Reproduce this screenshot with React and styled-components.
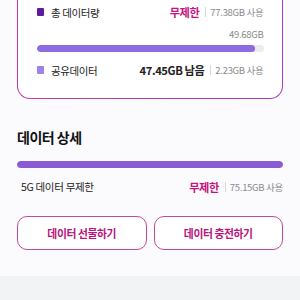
import styled, { createGlobalStyle } from 'styled-components';

const GlobalStyle = createGlobalStyle`
  html, body {
    margin: 0;
    padding: 0;
    background: #fbfafd;
    font-family: "Noto Sans CJK KR", "Noto Sans", sans-serif;
    color: #222;
  }
`;

const Page = styled.div`
  width: 300px;
  height: 300px;
  overflow: hidden;
  display: flex;
  flex-direction: column;
`;

const Content = styled.div`
  padding: 0 17px;
  display: flex;
  flex-direction: column;
`;

const Card = styled.div`
  margin-top: -16px;
  padding: 19px 18.5px 18.5px;
  border: 1.5px solid transparent;
  border-top: none;
  border-radius: 0 0 13px 13px;
  background:
    linear-gradient(#fff, #fff) padding-box,
    linear-gradient(to right, #c8399c, #b43bb0 60%, #a53dc6) border-box;
  display: flex;
  flex-direction: column;
`;

const Row = styled.div`
  height: 18px;
  display: flex;
  align-items: center;
  justify-content: space-between;
  margin-top: ${p => p.$mt || 0}px;
`;

const Label = styled.div`
  display: flex;
  align-items: center;
  gap: 7px;
  font-size: 10.5px;
  letter-spacing: -0.4px;
  color: #222;
`;

const Bullet = styled.span`
  width: 7.5px;
  height: 7.5px;
  border-radius: 1px;
  background: ${p => p.$color};
`;

const Values = styled.div`
  display: flex;
  align-items: center;
`;

const Strong = styled.span`
  font-size: 11.2px;
  font-weight: 700;
  letter-spacing: -0.4px;
  color: ${p => p.$color || '#222'};
`;

const Divider = styled.span`
  width: 1px;
  height: 10px;
  background: #d6d6d9;
  margin: 0 4px 0 6px;
`;

const Muted = styled.span`
  font-size: 9.5px;
  letter-spacing: -0.3px;
  color: #8a8a8e;
`;

const Caption = styled.div`
  margin-top: 6px;
  height: 14px;
  line-height: 14px;
  text-align: right;
  font-size: 9.5px;
  letter-spacing: -0.3px;
  color: #8a8a8e;
`;

const Track = styled.div`
  margin-top: ${p => p.$mt || 0}px;
  height: 7px;
  border-radius: 4px;
  background: #ececee;
  overflow: hidden;
`;

const Fill = styled.div`
  height: 100%;
  border-radius: 4px;
  background: ${p => p.$color};
`;

const Heading = styled.h2`
  margin: 27px 0 0;
  height: 22px;
  line-height: 22px;
  font-size: 14px;
  font-weight: 700;
  letter-spacing: -0.5px;
  color: #111;
`;

const DetailRow = styled(Row)`
  padding-left: 4px;
`;

const DetailLabel = styled.span`
  font-size: 10.5px;
  letter-spacing: -0.3px;
  color: #222;
`;

const Buttons = styled.div`
  margin-top: 20px;
  display: grid;
  grid-template-columns: 1fr 1fr;
  gap: 7px;
`;

const Button = styled.button`
  height: 34px;
  border: 1.5px solid #c04a9e;
  border-radius: 10px;
  background: #fff;
  font-family: inherit;
  font-size: 10.8px;
  font-weight: 700;
  letter-spacing: -0.4px;
  color: #b8157c;
  cursor: pointer;
`;

const Band = styled.div`
  margin-top: 26px;
  flex: 1;
  background: #f2f3f5;
`;

const MAGENTA = '#c4137e';

export default function App() {
  return (
    <Page>
      <GlobalStyle />
      <Content>
        <Card>
          <Row>
            <Label><Bullet $color="#5b1d9e" />총 데이터량</Label>
            <Values>
              <Strong $color={MAGENTA}>무제한</Strong>
              <Divider />
              <Muted>77.38GB 사용</Muted>
            </Values>
          </Row>
          <Caption>49.68GB</Caption>
          <Track $mt={4}>
            <Fill $color="#8d6be3" style={{ width: `${(218 / 226) * 100}%` }} />
          </Track>
          <Row $mt={9}>
            <Label><Bullet $color="#9c82e9" />공유데이터</Label>
            <Values>
              <Strong>47.45GB 남음</Strong>
              <Divider />
              <Muted>2.23GB 사용</Muted>
            </Values>
          </Row>
        </Card>

        <Heading>데이터 상세</Heading>
        <Track $mt={13}>
          <Fill $color="#8a5bd3" style={{ width: '100%' }} />
        </Track>
        <DetailRow $mt={10}>
          <DetailLabel>5G 데이터 무제한</DetailLabel>
          <Values>
            <Strong $color={MAGENTA}>무제한</Strong>
            <Divider />
            <Muted>75.15GB 사용</Muted>
          </Values>
        </DetailRow>

        <Buttons>
          <Button>데이터 선물하기</Button>
          <Button>데이터 충전하기</Button>
        </Buttons>
      </Content>
      <Band />
    </Page>
  );
}
